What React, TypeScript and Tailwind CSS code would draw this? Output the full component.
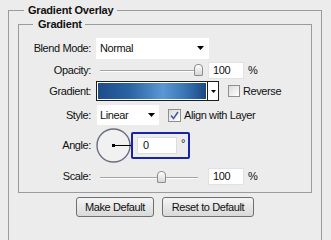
import React from 'react';

const Arrow = ({ w = 7, h = 4 }: { w?: number; h?: number }) => (
  <svg width={w} height={h} viewBox={`0 0 ${w} ${h}`}>
    <path d={`M0 0H${w}L${w / 2} ${h}Z`} fill="#000" />
  </svg>
);

const Label = ({ children }: { children: React.ReactNode }) => (
  <div className="w-[72px] shrink-0 text-right">{children}</div>
);

const Slider = ({ thumb }: { thumb: string }) => (
  <div className="relative ml-[5px] h-[14px] w-[108px] shrink-0">
    <div className="absolute left-[4px] right-[6px] top-[7px] h-[2px] border-t border-b border-t-[#a4a4a4] border-b-white" />
    <div
      className={`absolute top-[1px] h-[12px] w-[9px] rounded-t-[4px] rounded-b-[1px] border border-[#8c8c8c] bg-gradient-to-b from-white to-[#d6d6d6] ${thumb}`}
    />
  </div>
);

const NumBox = ({ value }: { value: string }) => (
  <div className="ml-[4px] h-[17px] w-[36px] border border-[#e2e2e2] bg-white pl-[4px] leading-[15px]">
    {value}
  </div>
);

const Check = ({ checked, size }: { checked?: boolean; size: string }) => (
  <div
    className={`flex shrink-0 items-center justify-center border border-[#8e8f8f] bg-gradient-to-br from-[#dcdcdc] to-white ${size}`}
  >
    {checked && (
      <svg width="9" height="9" viewBox="0 0 9 9">
        <path d="M1 4.5L3.5 7.5L8 1" fill="none" stroke="#4b5a9c" strokeWidth="1.6" />
      </svg>
    )}
  </div>
);

const Dial = () => (
  <svg width="35" height="35" viewBox="0 0 35 35" className="ml-[5px] shrink-0">
    <circle cx="17.5" cy="17.5" r="16.5" fill="#f1f1f1" stroke="#6b6e7e" strokeWidth="1.4" />
    <path d="M17.5 17.5H35" stroke="#000" strokeWidth="1" />
    <rect x="16" y="16" width="3" height="3" fill="#000" />
  </svg>
);

export default function App() {
  return (
    <div className="h-[240px] w-[331px] overflow-hidden bg-[#ececec] pt-[4px] font-['Liberation_Sans',Arial,sans-serif] text-[11px] tracking-[-0.4px] text-[#111]">
      <fieldset className="ml-[8px] w-[314px] border border-[#9b9b9b] px-[9px] pb-[40px]">
        <legend className="ml-[6px] px-[4px] font-bold leading-[12px] tracking-[-0.2px]">Gradient Overlay</legend>

        <fieldset className="mt-[2px] border border-[#9b9b9b] pb-[7px]">
          <legend className="ml-[14px] pl-[5px] pr-[3px] font-bold leading-[12px] tracking-[-0.2px]">Gradient</legend>

          <div className="mt-[7px] flex flex-col">
            <div className="flex h-[22px] items-center">
              <Label>Blend Mode:</Label>
              <div className="ml-[5px] flex h-[21px] w-[113px] items-center justify-between bg-white pl-[4px] pr-[5px]">
                <span>Normal</span>
                <Arrow />
              </div>
            </div>

            <div className="mt-[2px] flex h-[18px] items-center">
              <Label>Opacity:</Label>
              <Slider thumb="left-[98px]" />
              <NumBox value="100" />
              <span className="ml-[4px] self-start pt-[1px]">%</span>
            </div>

            <div className="mt-[2px] flex h-[20px] items-center">
              <Label>Gradient:</Label>
              <div className="ml-[5px] flex h-[20px] w-[123px] border border-[#1c1c1c] bg-white">
                <div className="m-[1px] flex-1 bg-[linear-gradient(90deg,#1d4c88,#2c64a4_30%,#5a98d4_60%,#3a76b4_80%,#1a4884)]" />
                <div className="flex w-[11px] items-center justify-center border-l border-[#1c1c1c]">
                  <Arrow w={5} h={3} />
                </div>
              </div>
              <Check size="ml-[9px] h-[12px] w-[12px]" />
              <span className="ml-[3px]">Reverse</span>
            </div>

            <div className="mt-[4px] flex h-[20px] items-center">
              <Label>Style:</Label>
              <div className="ml-[6px] flex h-[20px] w-[62px] items-center justify-between bg-white pl-[3px] pr-[4px]">
                <span>Linear</span>
                <Arrow />
              </div>
              <Check checked size="ml-[9px] h-[13px] w-[13px]" />
              <span className="ml-[3px]">Align with Layer</span>
            </div>

            <div className="mt-[3px] flex h-[35px] items-center">
              <Label>Angle:</Label>
              <Dial />
              <div className="flex h-[27px] w-[59px] items-center rounded-[2px] border-2 border-[#1624a8] pl-[4px]">
                <div className="h-[17px] w-[40px] border border-[#dcdcdc] bg-white pl-[5px] leading-[15px]">0</div>
                <span className="ml-[4px] self-start pt-[2px] leading-[14px]">°</span>
              </div>
            </div>

            <div className="mt-[5px] flex h-[17px] items-center">
              <Label>Scale:</Label>
              <Slider thumb="left-[61px]" />
              <NumBox value="100" />
              <span className="ml-[4px] self-start">%</span>
            </div>
          </div>
        </fieldset>

        <div className="mt-[4px] flex justify-center gap-[8px]">
          <button className="h-[20px] w-[78px] rounded-[3px] border border-[#707070] bg-gradient-to-b from-[#f5f5f5] to-[#d9d9d9] leading-[18px]">
            Make Default
          </button>
          <button className="h-[20px] w-[92px] rounded-[3px] border border-[#707070] bg-gradient-to-b from-[#f5f5f5] to-[#d9d9d9] leading-[18px]">
            Reset to Default
          </button>
        </div>
      </fieldset>
    </div>
  );
}
